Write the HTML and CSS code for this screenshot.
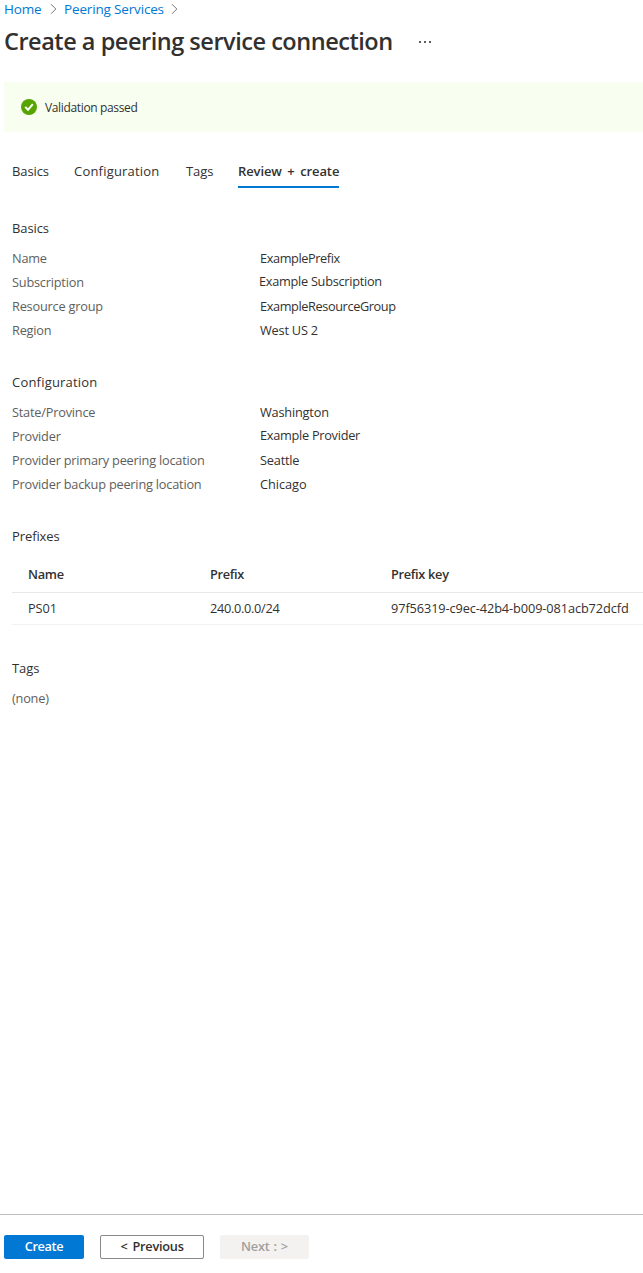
FILE: index.html
```html
<!DOCTYPE html>
<html lang="en">
<head>
<meta charset="utf-8">
<title>Create a peering service connection</title>
<link rel="stylesheet" href="styles.css">
</head>
<body>
<div class="blade">
  <nav class="breadcrumb">
    <a class="crumb-home">Home</a>
    <svg class="chevron" width="7" height="12" viewBox="0 0 7 12"><path d="M1 1.2 5.8 6 1 10.8"/></svg>
    <a class="crumb-services">Peering Services</a>
    <svg class="chevron" width="7" height="12" viewBox="0 0 7 12"><path d="M1 1.2 5.8 6 1 10.8"/></svg>
  </nav>
  <header class="title-row">
    <h1>Create a peering service connection</h1>
    <svg class="more" width="12" height="2" viewBox="0 0 12 2"><path d="M0 0h2v2H0zM5 0h2v2H5zM10 0h2v2h-2z"/></svg>
  </header>
  <div class="banner">
    <svg width="16" height="16" viewBox="0 0 16 16"><circle cx="8" cy="8" r="8" fill="#57a300"/><path d="M4.2 7.9 7 10.8 11.8 5.1" fill="none" stroke="#fff" stroke-width="2"/></svg>
    <span>Validation passed</span>
  </div>
  <nav class="tabs">
    <span class="tab tab-basics">Basics</span>
    <span class="tab tab-config wide">Configuration</span>
    <span class="tab tab-tags">Tags</span>
    <span class="tab tab-active">Review + create</span>
  </nav>
  <main>
    <section>
      <h2>Basics</h2>
      <dl>
        <dt>Name</dt><dd class="tight">ExamplePrefix</dd>
        <dt>Subscription</dt><dd class="raised outdent">Example Subscription</dd>
        <dt>Resource group</dt><dd class="tight">ExampleResourceGroup</dd>
        <dt>Region</dt><dd>West US 2</dd>
      </dl>
    </section>
    <section>
      <h2 class="wide">Configuration</h2>
      <dl>
        <dt>State/Province</dt><dd>Washington</dd>
        <dt>Provider</dt><dd class="raised">Example Provider</dd>
        <dt>Provider primary peering location</dt><dd>Seattle</dd>
        <dt>Provider backup peering location</dt><dd class="loose">Chicago</dd>
      </dl>
    </section>
    <section class="prefixes">
      <h2>Prefixes</h2>
      <div class="grid">
        <div class="row head"><span>Name</span><span>Prefix</span><span>Prefix key</span></div>
        <div class="row"><span>PS01</span><span class="address">240.0.0.0/24</span><span>97f56319-c9ec-42b4-b009-081acb72dcfd</span></div>
      </div>
    </section>
    <section>
      <h2>Tags</h2>
      <p class="none">(none)</p>
    </section>
  </main>
  <footer>
    <button class="btn primary">Create</button>
    <button class="btn previous">&lt; Previous</button>
    <button class="btn next" disabled>Next : &gt;</button>
  </footer>
</div>
</body>
</html>
```
FILE: styles.css
```css
* { box-sizing: border-box; }
body {
  margin: 0;
  background: #fff;
  color: #323130;
  font: 12.75px/24px "Open Sans", "Noto Sans", sans-serif;
  letter-spacing: -0.1px;
  white-space: nowrap;
  overflow: hidden;
}
.blade { display: flex; flex-direction: column; height: 1273px; }
.breadcrumb {
  display: flex;
  align-items: center;
  height: 18px;
  padding-left: 4px;
  color: #0078d4;
  font-size: 13.5px;
  letter-spacing: -0.16px;
}
.crumb-home { width: 46px; }
.crumb-services { width: 107px; margin-left: 7px; }
.chevron { fill: none; stroke: #7a7876; stroke-width: 1; }
.title-row { display: flex; align-items: center; height: 48px; padding-left: 4px; }
h1 { width: 415px; margin: 0; padding-bottom: 2px; font-size: 23.5px; font-weight: 600; letter-spacing: -0.47px; }
.more { fill: #605e5c; }
.banner {
  display: flex;
  align-items: center;
  gap: 8px;
  height: 50px;
  margin: 16px 0 0 4px;
  padding-left: 17px;
  background: #f8fff0;
  font-size: 12px;
  letter-spacing: -0.35px;
}
.banner span { padding-top: 2px; }
.tabs { display: flex; height: 32px; margin-top: 24px; padding-left: 12px; line-height: 31px; font-size: 13px; }
.tab-basics { width: 62px; }
.tab-config { width: 112px; }
.tab-tags { width: 52px; }
.tab-active { width: 101px; font-weight: 600; word-spacing: 2.2px; border-bottom: 2px solid #0078d4; }
.wide { letter-spacing: 0.2px; }
main { flex: 1; padding: 28px 0 0 12px; }
section { margin-bottom: 28px; }
.prefixes { margin-bottom: 31px; }
h2 { margin: 0 0 6px; font-size: 13px; font-weight: 400; line-height: 24px; }
dl { display: grid; grid-template-columns: 248px auto; grid-auto-rows: 24px; margin: 0; }
dt, .none { color: #605e5c; margin: 0; letter-spacing: -0.21px; }
dd { margin: 0; letter-spacing: -0.2px; }
.tight { letter-spacing: -0.4px; }
.loose { letter-spacing: -0.05px; }
.raised { margin-top: -1px; letter-spacing: -0.28px; }
.outdent { margin-left: -1px; }
.row { display: grid; grid-template-columns: 182px 181px auto; padding-left: 16px; height: 32px; line-height: 31px; border-bottom: 1px solid #f3f2f1; }
.address { letter-spacing: -0.3px; }
.head { height: 39px; line-height: 41px; font-weight: 600; border-color: #e8e8e8; letter-spacing: -0.3px; }
footer { display: flex; gap: 16px; height: 59px; padding: 20px 0 0 4px; border-top: 1px solid #bdbdbd; }
.btn { height: 24px; padding: 0 0 2px; border: 0; border-radius: 2px; font: 600 12.75px/20px "Open Sans", sans-serif; letter-spacing: -0.25px; }
.primary { width: 80px; background: #0078d4; color: #fff; letter-spacing: -0.4px; }
.previous { width: 104px; background: #fff; color: #323130; border: 1px solid #8a8886; word-spacing: 2px; }
.next { width: 89px; background: #f3f2f1; color: #a19f9d; word-spacing: 1px; }
```
